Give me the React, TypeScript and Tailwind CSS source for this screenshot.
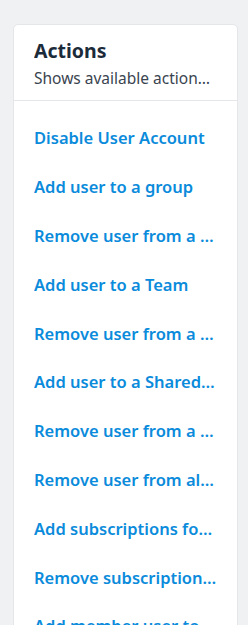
const actions = [
  'Disable User Account',
  'Add user to a group',
  'Remove user from a group',
  'Add user to a Team',
  'Remove user from a Team',
  'Add user to a Shared Drive',
  'Remove user from a Shared Drive',
  'Remove user from all groups',
  'Add subscriptions for user',
  'Remove subscriptions from user',
  'Add member user to a channel',
];

export default function App() {
  return (
    <div className="min-h-[625px] h-[625px] overflow-hidden bg-[#f0f1f3] pl-[13px] pr-[10px] pt-[24px] font-['Noto_Sans','Lato',sans-serif]">
      <div className="w-[225px] rounded-[5px] border border-[#e4e6e9] bg-white">
        <div className="h-[76px] border-b border-[#e4e6e9] px-[20px] pt-[12px]">
          <h2 className="truncate text-[19.5px] font-bold leading-[28px] text-[#1c2b3a]">Actions</h2>
          <p className="mt-[2px] truncate text-[15.5px] leading-[22px] text-[#3a4450]">
            Shows available actions for this user
          </p>
        </div>
        <ul className="px-[20px] pt-[13px]">
          {actions.map((a) => (
            <li key={a} className="flex h-[48.8px] items-center">
              <a href="#" className="block truncate text-[16.5px] font-semibold leading-[22px] text-[#0b8bdb]">
                {a}
              </a>
            </li>
          ))}
        </ul>
      </div>
    </div>
  );
}
